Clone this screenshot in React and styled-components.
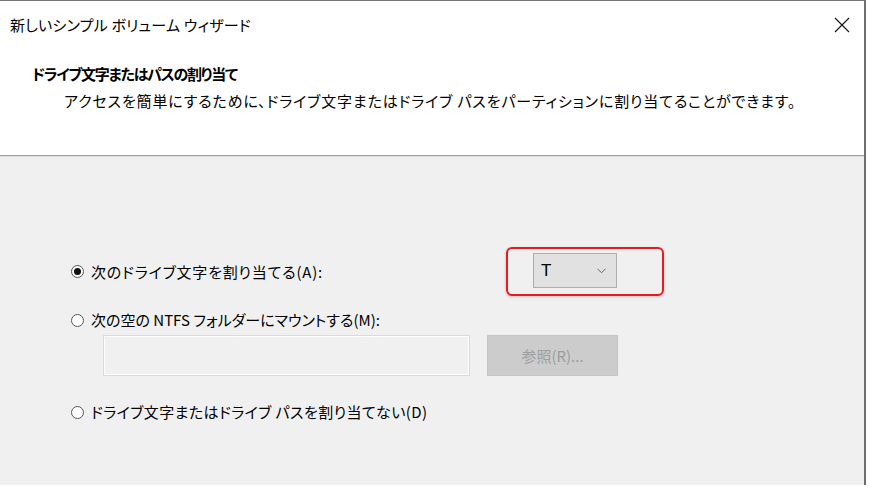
import React from 'react';
import styled, { createGlobalStyle } from 'styled-components';

const GlobalStyle = createGlobalStyle`
  html, body {
    margin: 0;
    padding: 0;
    background: #ffffff;
  }
  body {
    font-family: "Noto Sans CJK JP", "Noto Sans", sans-serif;
    color: #000;
    font-feature-settings: "palt";
  }
`;

const Window = styled.div`
  width: 866px;
  height: 485px;
  border-top: 1px solid #777;
  border-right: 2px solid #6f6f6f;
  box-sizing: border-box;
  display: flex;
  flex-direction: column;
  background: #f0f0f0;
  overflow: hidden;
`;

const Header = styled.div`
  background: #fff;
  height: 154px;
  border-bottom: 1px solid #a0a0a0;
  box-shadow: 0 1px 0 #dcdcdc;
  display: flex;
  flex-direction: column;
`;

const TitleBar = styled.div`
  height: 47px;
  display: flex;
  align-items: center;
  justify-content: space-between;
  padding: 0 14px 0 10px;
`;

const Title = styled.div`
  font-size: 15px;
  letter-spacing: 0.2px;
`;

const CloseBtn = styled.div`
  width: 16px;
  height: 16px;
  display: flex;
  align-items: center;
  justify-content: center;
`;

const Heading = styled.div`
  font-size: 15px;
  font-weight: 700;
  margin: 15px 0 0 32px;
  line-height: 22px;
  letter-spacing: -1.3px;
`;

const SubText = styled.div`
  font-size: 15px;
  margin: 5px 0 0 64px;
  line-height: 22px;
  letter-spacing: 0.85px;
`;

const Body = styled.div`
  flex: 1;
  padding: 91px 0 0 71px;
  display: flex;
  flex-direction: column;
`;

const ChoiceRow = styled.div`
  display: grid;
  grid-template-columns: 435px auto;
  align-items: center;
`;

const Radio = styled.label`
  display: flex;
  align-items: center;
  gap: 7px;
  font-size: 15px;
  line-height: 20px;
  margin-top: ${p => p.$top || 0}px;
  letter-spacing: ${p => p.$spacing || 0}px;
`;

const Circle = styled.span`
  width: 13px;
  height: 13px;
  flex: none;
  border: 1px solid #555;
  border-radius: 50%;
  box-sizing: border-box;
  display: flex;
  align-items: center;
  justify-content: center;
  background: #fff;
  &::after {
    content: '';
    width: 7px;
    height: 7px;
    border-radius: 50%;
    background: ${p => (p.$on ? '#111' : 'transparent')};
  }
`;

const Highlight = styled.div`
  width: 158px;
  height: 49px;
  box-sizing: border-box;
  border: 2px solid #e8191f;
  border-radius: 6px;
  box-shadow: 0 1px 3px rgba(0, 0, 0, 0.2);
  padding: 4px 0 0 25px;
`;

const Select = styled.div`
  width: 84px;
  height: 35px;
  box-sizing: border-box;
  background: #e1e1e1;
  border: 1px solid #adadad;
  display: flex;
  align-items: center;
  justify-content: space-between;
  padding: 0 10px 0 7px;
  font-family: "Liberation Sans", "Noto Sans", sans-serif;
  font-size: 17px;
`;

const FolderRow = styled.div`
  display: flex;
  align-items: center;
  gap: 17px;
  margin: 5px 0 0 32px;
`;

const PathInput = styled.div`
  width: 367px;
  height: 41px;
  box-sizing: border-box;
  background: #f0f0f0;
  border: 1px solid #dadada;
  box-shadow: inset 0 0 0 1px #fdfdfd;
`;

const BrowseButton = styled.div`
  width: 131px;
  height: 41px;
  box-sizing: border-box;
  background: #cccccc;
  border: 1px solid #c4c4c4;
  color: #9d9d9d;
  font-size: 15px;
  display: flex;
  align-items: center;
  justify-content: center;
`;

export default function App() {
  return (
    <>
      <GlobalStyle />
      <Window>
        <Header>
          <TitleBar>
            <Title>新しいシンプル ボリューム ウィザード</Title>
            <CloseBtn>
              <svg width="16" height="16" viewBox="0 0 16 16">
                <path d="M1 1L15 15M15 1L1 15" stroke="#111" strokeWidth="1.1" fill="none" />
              </svg>
            </CloseBtn>
          </TitleBar>
          <Heading>ドライブ文字またはパスの割り当て</Heading>
          <SubText>アクセスを簡単にするために、ドライブ文字またはドライブ パスをパーティションに割り当てることができます。</SubText>
        </Header>
        <Body>
          <ChoiceRow>
            <Radio $spacing={0.8}>
              <Circle $on />
              次のドライブ文字を割り当てる(A):
            </Radio>
            <Highlight>
              <Select>
                <span>T</span>
                <svg width="9" height="6" viewBox="0 0 9 6">
                  <path d="M0.5 0.8L4.5 4.8L8.5 0.8" stroke="#666" strokeWidth="1" fill="none" />
                </svg>
              </Select>
            </Highlight>
          </ChoiceRow>
          <Radio $top={14}>
            <Circle />
            次の空の NTFS フォルダーにマウントする(M):
          </Radio>
          <FolderRow>
            <PathInput />
            <BrowseButton>参照(R)...</BrowseButton>
          </FolderRow>
          <Radio $top={26} $spacing={0.4}>
            <Circle />
            ドライブ文字またはドライブ パスを割り当てない(D)
          </Radio>
        </Body>
      </Window>
    </>
  );
}
